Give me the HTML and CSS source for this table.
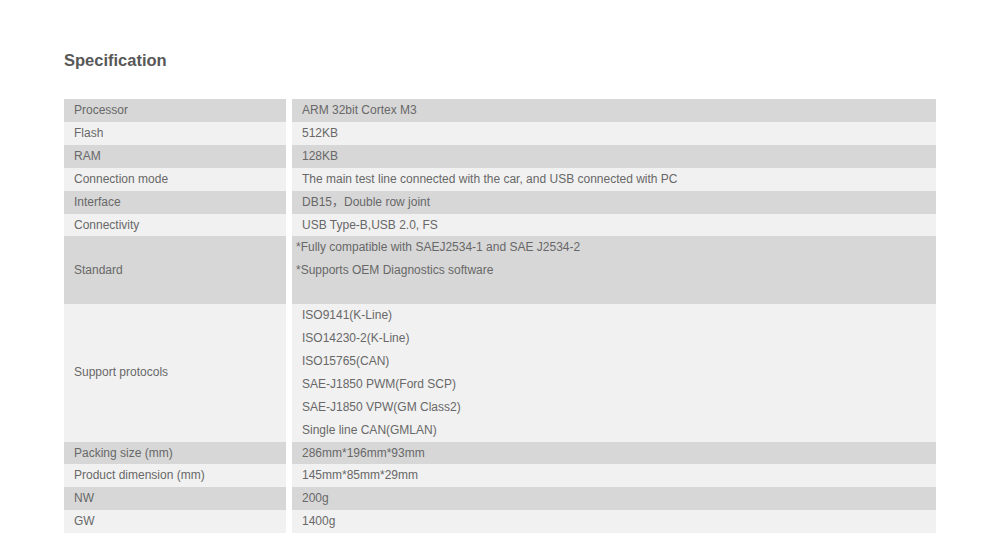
FILE: index.html
```html
<!DOCTYPE html>
<html>
<head>
<meta charset="utf-8">
<link rel="stylesheet" href="styles.css">
</head>
<body>
<div class="page">
  <h2 class="title">Specification</h2>
  <div class="spec">
    <div class="row dark"><div class="key">Processor</div><div class="val">ARM 32bit Cortex M3</div></div>
    <div class="row light"><div class="key">Flash</div><div class="val">512KB</div></div>
    <div class="row dark"><div class="key">RAM</div><div class="val">128KB</div></div>
    <div class="row light"><div class="key">Connection mode</div><div class="val">The main test line connected with the car, and USB connected with PC</div></div>
    <div class="row dark"><div class="key">Interface</div><div class="val">DB15，Double row joint</div></div>
    <div class="row light"><div class="key">Connectivity</div><div class="val">USB Type-B,USB 2.0, FS</div></div>
    <div class="row dark"><div class="key">Standard</div><div class="val std"><p>*Fully compatible with SAEJ2534-1 and SAE J2534-2</p><p>*Supports OEM Diagnostics software</p><p class="blank"></p></div></div>
    <div class="row light"><div class="key">Support protocols</div><div class="val"><p>ISO9141(K-Line)</p><p>ISO14230-2(K-Line)</p><p>ISO15765(CAN)</p><p>SAE-J1850 PWM(Ford SCP)</p><p>SAE-J1850 VPW(GM Class2)</p><p>Single line CAN(GMLAN)</p></div></div>
    <div class="row dark"><div class="key">Packing size (mm)</div><div class="val">286mm*196mm*93mm</div></div>
    <div class="row light"><div class="key">Product dimension (mm)</div><div class="val">145mm*85mm*29mm</div></div>
    <div class="row dark"><div class="key">NW</div><div class="val">200g</div></div>
    <div class="row light"><div class="key">GW</div><div class="val">1400g</div></div>
  </div>
</div>
</body>
</html>
```

FILE: styles.css
```css
html, body {
  margin: 0;
  padding: 0;
  background: #ffffff;
}
body {
  font-family: "Liberation Sans", Arial, "Noto Sans CJK SC", sans-serif;
}
.page {
  padding: 50px 0 0 64px;
  width: 872px;
}
.title {
  margin: 0 0 29px 0;
  font-size: 16.5px;
  line-height: 20px;
  font-weight: bold;
  color: #585858;
}
.spec {
  display: flex;
  flex-direction: column;
}
.row {
  display: flex;
  gap: 6px;
  font-size: 12px;
  color: #686868;
}
.key {
  width: 212px;
  padding-left: 10px;
  display: flex;
  align-items: center;
  line-height: 22.9px;
}
.val {
  flex: 1;
  padding-left: 10px;
  line-height: 22.9px;
  min-height: 22.9px;
}
.val p {
  margin: 0;
  height: 22.9px;
}
.val .blank {
  height: 22px;
}
.val.std {
  padding-left: 4px;
}
.dark .key, .dark .val {
  background: #d7d7d7;
}
.light .key, .light .val {
  background: #f1f1f1;
}
```
